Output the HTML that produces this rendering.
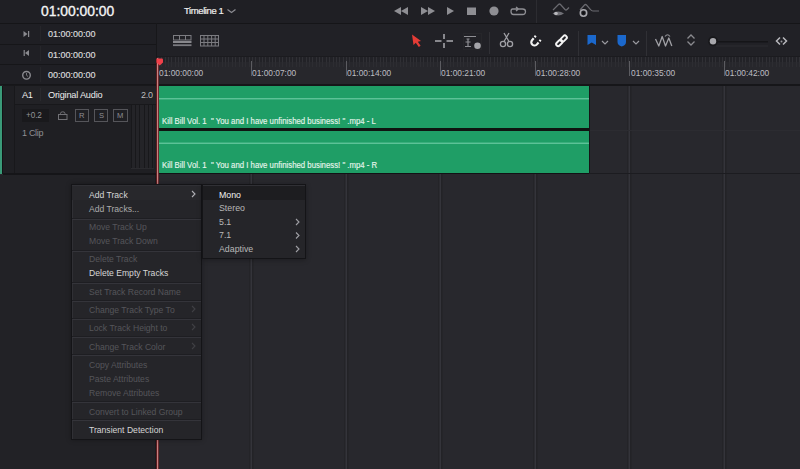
<!DOCTYPE html>
<html><head><meta charset="utf-8">
<style>
*{margin:0;padding:0;box-sizing:border-box}
html,body{width:800px;height:469px;overflow:hidden;background:#28282d;font-family:"Liberation Sans",sans-serif;color:#c8c8c8}
.a{position:absolute}
.t{position:absolute;white-space:pre;line-height:12px}
svg{position:absolute;overflow:visible}
#top{left:0;top:0;width:800px;height:24px;background:#1f1f24;border-bottom:1px solid #151518}
.row{position:absolute;left:0;width:156px;height:21px;border-bottom:1px solid #161619;background:#1f1f24}
.tc{font-size:9px;color:#dcdcdc;-webkit-text-stroke:0.2px #d0d0d0}
.vl{position:absolute;width:1px;background:#323237}
.mi{position:absolute;left:89px;font-size:8.6px;line-height:12px;white-space:pre;color:#d6d6d6}
.dis{color:#55555a}
.ms{position:absolute;left:72px;width:129px;height:2px;border-top:1px solid #1e1e22;background:#34343a}
.si{position:absolute;left:219px;font-size:8.8px;line-height:12px;white-space:pre;color:#b8b8b8}
</style></head><body>
<!-- top bar -->
<div class="a" id="top"></div>
<div class="t" style="left:41px;top:3px;font-size:14.6px;transform:scaleX(0.95);transform-origin:0 0;-webkit-text-stroke:0.35px #f4f4f4;color:#f4f4f4;line-height:16px">01:00:00:00</div>
<div class="t" style="left:184px;top:5px;font-size:9.5px;letter-spacing:-0.4px;-webkit-text-stroke:0.2px #eee;color:#f0f0f0">Timeline 1</div>
<svg style="left:226px;top:8px" width="12" height="6"><path d="M1.5 1.5 L5.5 4.5 L9.5 1.5" stroke="#8a8a90" stroke-width="1.3" fill="none"/></svg>

<!-- transport -->
<svg style="left:394px;top:7px" width="140" height="10">
 <g fill="#8e8e93">
  <path d="M7 0 L0 4 L7 8Z M14 0 L7 4 L14 8Z"/>
  <path d="M27 0 L34 4 L27 8Z M34 0 L41 4 L34 8Z"/>
  <path d="M53 0 L60 4 L53 8Z"/>
  <rect x="73" y="0.5" width="9" height="7.5"/>
  <circle cx="100" cy="4" r="4.6"/>
 </g>
 <path d="M118.5 2 H128.5 Q131.5 2 131.5 4.5 Q131.5 7.5 128.5 7.5 H119.5 Q117 7.5 117 4.5 Q117 2 118.5 2 M122 0 L124.5 2 L122 4" stroke="#8e8e93" stroke-width="1.3" fill="none"/>
</svg>
<div class="a" style="left:536px;top:0;width:1px;height:23px;background:#2c2c31"></div>
<!-- keyframe icons -->
<svg style="left:545px;top:0px" width="60" height="20">
 <g stroke="#6a6a70" stroke-width="1.2" fill="none">
  <path d="M8 10 Q11 7 13.5 4.5 Q14.5 3.5 15.5 4.5 L20 9.5 Q21 10.5 22 9.5 L24 7.5"/>
  <path d="M35 10 L39.5 5 Q40.5 4 41.5 5 L45.5 9.5 Q46.5 11 48 11 H54"/>
 </g>
 <path d="M7.5 13.5 Q13 9.5 19 13.5 Q13 17.5 7.5 13.5Z" fill="#707076"/>
 <circle cx="11" cy="13.5" r="1.8" fill="#b8b8bd"/>
 <circle cx="38.5" cy="13" r="3.2" fill="none" stroke="#a8a8ad" stroke-width="1.6"/>
 <circle cx="38.5" cy="13" r="1.2" fill="#0e0e10"/>
</svg>

<!-- left panel -->
<div class="a" style="left:0;top:24px;width:156px;height:150px;background:#212125"></div>
<div class="row" style="top:24px;height:21px"></div>
<div class="row" style="top:45px;height:20px"></div>
<div class="row" style="top:65px;height:20px"></div>
<div class="vl" style="left:40px;top:26px;height:15px;background:#26262a"></div>
<div class="vl" style="left:40px;top:46px;height:15px;background:#26262a"></div>
<div class="vl" style="left:40px;top:67px;height:15px;background:#26262a"></div>
<div class="t tc" style="left:48px;top:28px">01:00:00:00</div>
<div class="t tc" style="left:48px;top:49px">01:00:00:00</div>
<div class="t tc" style="left:48px;top:69px">00:00:00:00</div>
<svg style="left:22px;top:29px" width="12" height="52">
 <g fill="#8a8a8f">
  <path d="M1.5 2 L5.5 5 L1.5 8Z"/><rect x="6" y="2" width="1.2" height="6"/>
  <path d="M7 21 L3 24 L7 27Z"/><rect x="1.6" y="21" width="1.2" height="6"/>
 </g>
 <circle cx="4.5" cy="46.3" r="3.8" stroke="#8a8a8f" stroke-width="1.4" fill="none"/>
 <path d="M4.5 44 V46.3 L6 47.5" stroke="#77777c" stroke-width="1" fill="none"/>
</svg>

<!-- track header -->
<div class="a" style="left:0;top:175px;width:156px;height:294px;background:#222226;border-right:1px solid #1a1a1e"></div>
<div class="a" style="left:0;top:86px;width:2px;height:88px;background:#3a9a78"></div>
<div class="a" style="left:2px;top:86px;width:1px;height:88px;background:#121214"></div>
<div class="a" style="left:3px;top:85px;width:153px;height:90px;background:#1f1f23;border-top:1px solid #18181b;border-bottom:2px solid #151518"></div>
<div class="a" style="left:14px;top:86px;width:1px;height:87px;background:#18181b"></div>
<div class="a" style="left:15px;top:86px;width:141px;height:18px;background:#222226"></div>
<div class="a" style="left:15px;top:104px;width:141px;height:1px;background:#18181b"></div>
<div class="vl" style="left:40px;top:88px;height:13px;background:#2a2a2e"></div>
<div class="t" style="left:22px;top:89px;font-size:9.2px;letter-spacing:-0.3px;color:#ececec">A1</div>
<div class="t" style="left:48px;top:89px;font-size:9.2px;letter-spacing:-0.2px;color:#ececec">Original Audio</div>
<div class="t" style="left:141px;top:89px;font-size:9px;letter-spacing:-0.2px;color:#bcbcbc">2.0</div>
<div class="a" style="left:22px;top:109px;width:27px;height:13px;background:#19191c"></div>
<div class="t" style="left:26px;top:110px;font-size:8.2px;letter-spacing:-0.1px;color:#949497">+0.2</div>
<svg style="left:58px;top:111px" width="12" height="12">
 <path d="M2.5 3.5 V2.5 Q2.5 0.8 4.75 0.8 Q7 0.8 7 2.5 V3.5" stroke="#707075" stroke-width="1" fill="none"/>
 <rect x="0.5" y="3.5" width="8.5" height="5" stroke="#707075" stroke-width="1" fill="none"/>
</svg>
<div class="a" style="left:75px;top:109px;width:14px;height:13px;border:1px solid #55555a"></div>
<div class="a" style="left:94px;top:109px;width:14px;height:13px;border:1px solid #55555a"></div>
<div class="a" style="left:113px;top:109px;width:15px;height:13px;border:1px solid #55555a"></div>
<div class="t" style="left:79px;top:110px;font-size:7.6px;color:#8e8e93">R</div>
<div class="t" style="left:99px;top:110px;font-size:7.6px;color:#8e8e93">S</div>
<div class="t" style="left:117px;top:110px;font-size:7.6px;color:#8e8e93">M</div>
<div class="t" style="left:22px;top:127px;font-size:9px;letter-spacing:-0.3px;color:#909094">1 Clip</div>
<div class="a" style="left:131px;top:105px;width:23px;height:64px;background:repeating-linear-gradient(90deg,#18181b 0 1px,#242428 1px 4.2px);border-bottom:1px solid #2a2a2e"></div>

<!-- timeline toolbar -->
<div class="a" style="left:157px;top:24px;width:643px;height:33px;background:#212126"></div>
<div class="a" style="left:156px;top:23px;width:1px;height:151px;background:#17171a"></div>
<svg style="left:173px;top:35px" width="50" height="13">
 <g stroke="#7c7c81" stroke-width="1" fill="none">
  <rect x="0.5" y="0.5" width="17.5" height="4.5"/>
  <path d="M6.5 0 V5 M12.5 0 V5"/>
 </g>
 <rect x="0" y="6" width="18.5" height="2" fill="#88888d"/>
 <rect x="0" y="9.3" width="18.5" height="1.8" fill="#7a7a7f"/>
 <g stroke="#7c7c81" stroke-width="1" fill="none">
  <rect x="27.5" y="0.5" width="18" height="10.5"/>
  <path d="M27 4 H46 M27 7.5 H46 M31 0 V11 M34.8 0 V11 M38.6 0 V11 M42.2 0 V11"/>
 </g>
</svg>
<!-- tools -->
<svg style="left:410px;top:33px" width="390" height="18">
 <path d="M2 1.5 L3.5 12 L5.8 9.8 L8.8 14 L10.6 12.8 L7.8 8.8 L11 8Z" fill="#e53c36"/>
 <g stroke="#ababb0" stroke-width="1.5" fill="none">
  <path d="M34 1 V6 M34 10 V15 M25 8 H31.5 M36.5 8 H43"/>
 </g>
 <g stroke="#8e8e93" stroke-width="1.2" fill="none">
  <path d="M54 3.5 H66 M56.5 6 H59.5 M58 6 V13 M55 13.5 H61 M55.5 9 H60.5"/>
 </g>
 <rect x="53.5" y="0.5" width="18" height="16" stroke="#26262a" stroke-width="1" fill="none"/>
 <circle cx="67.5" cy="12.8" r="3.3" fill="#a5a5aa"/>
 <g stroke="#a0a0a5" stroke-width="1.3" fill="none">
  <circle cx="93" cy="11" r="2.6"/><circle cx="100" cy="11" r="2.6"/>
  <path d="M94 8.5 L99 0 M99 8.5 L94 0"/>
 </g>
 <g transform="translate(124.5 9.3) rotate(40)" stroke="#f2f2f2" fill="none">
  <path d="M-3.2 -2.5 V0 A3.2 3.2 0 0 0 3.2 0 V-2.5" stroke-width="2.2"/>
  <path d="M-3.2 -4 V-5.8 M3.2 -4 V-5.8" stroke-width="2.2"/>
 </g>
 <g stroke="#f2f2f2" stroke-width="1.9" fill="none">
  <rect x="-3.6" y="-2" width="7.2" height="4" rx="2" transform="translate(153.7 5.6) rotate(-45)"/>
  <rect x="-3.6" y="-2" width="7.2" height="4" rx="2" transform="translate(149.3 10) rotate(-45)"/>
 </g>
</svg>
<div class="a" style="left:489px;top:32px;width:1px;height:22px;background:#303035"></div>
<div class="a" style="left:578px;top:31px;width:1px;height:25px;background:#303035"></div>
<div class="a" style="left:646px;top:31px;width:1px;height:25px;background:#303035"></div>
<svg style="left:585px;top:33px" width="210" height="16">
 <path d="M2.5 2 H11 V12 L6.75 9.5 L2.5 12Z" fill="#1b68cc"/>
 <path d="M17 8 L20 11 L23 8" stroke="#9a9aa0" stroke-width="1.2" fill="none"/>
 <path d="M32.5 2 H41 V9 Q41 12 36.75 13.5 Q32.5 12 32.5 9Z" fill="#1b68cc"/>
 <path d="M48 8 L51 11 L54 8" stroke="#9a9aa0" stroke-width="1.2" fill="none"/>
 <path d="M70.5 6 L73.8 13 L77.2 3.5 L80.5 13 L83.8 5 L86.8 13" stroke="#a0a0a5" stroke-width="1.3" stroke-linejoin="round" fill="none"/>
 <path d="M80 3.5 Q82.5 0 85 3.5" stroke="#8a8a8f" stroke-width="1.2" fill="none"/>
 <path d="M102.5 5.5 L106 2 L109.5 5.5 M102.5 8.5 L106 12 L109.5 8.5" stroke="#8a8a8f" stroke-width="1.3" fill="none"/>
 <rect x="131" y="8" width="52" height="1.5" fill="#151518"/>
 <rect x="131" y="12.5" width="52" height="1" fill="#2c2c31"/>
 <circle cx="128" cy="8.3" r="5" fill="#18181b"/>
 <circle cx="128" cy="8.3" r="3.2" fill="#a8a8ad"/>
 <path d="M195 4.5 L191.5 8 L195 11.5 M198 4.5 L201.5 8 L198 11.5" stroke="#b8b8bd" stroke-width="1.5" fill="none"/>
 <circle cx="196.5" cy="8.5" r="1" fill="#9a9a9f"/>
</svg>

<!-- ruler -->
<div class="a" style="left:157px;top:56px;width:643px;height:1px;background:#1b1b1f"></div>
<div class="a" style="left:157px;top:58px;width:643px;height:27px;background:#27272c"></div>
<div class="a" style="left:157px;top:84px;width:643px;height:2px;background:#161619"></div>

<!-- grid lines -->
<div class="a" style="left:249px;top:86px;width:5px;height:383px;background:linear-gradient(90deg,#26262a 0,#222226 1px,#34343a 2px,#34343a 3px,#222226 3px,#26262a 5px)"></div>
<div class="a" style="left:344px;top:86px;width:5px;height:383px;background:linear-gradient(90deg,#26262a 0,#222226 1px,#34343a 2px,#34343a 3px,#222226 3px,#26262a 5px)"></div>
<div class="a" style="left:438px;top:86px;width:5px;height:383px;background:linear-gradient(90deg,#26262a 0,#222226 1px,#34343a 2px,#34343a 3px,#222226 3px,#26262a 5px)"></div>
<div class="a" style="left:533px;top:86px;width:5px;height:383px;background:linear-gradient(90deg,#26262a 0,#222226 1px,#34343a 2px,#34343a 3px,#222226 3px,#26262a 5px)"></div>
<div class="a" style="left:627px;top:86px;width:5px;height:383px;background:linear-gradient(90deg,#26262a 0,#222226 1px,#34343a 2px,#34343a 3px,#222226 3px,#26262a 5px)"></div>
<div class="a" style="left:722px;top:86px;width:5px;height:383px;background:linear-gradient(90deg,#26262a 0,#222226 1px,#34343a 2px,#34343a 3px,#222226 3px,#26262a 5px)"></div>
<div class="a" style="left:157px;top:130px;width:643px;height:1px;background:#2c2c31"></div>
<div class="a" style="left:157px;top:173px;width:643px;height:1px;background:#1c1c20"></div>

<!-- ruler ticks + labels -->
<div class="a" style="left:158px;top:57px;width:642px;height:5px;background:repeating-linear-gradient(90deg,#303035 0 1px,#222227 1px 3.357px)"></div>
<div class="a" style="left:158px;top:62px;width:642px;height:5px;background:repeating-linear-gradient(90deg,#2d2d32 0 1px,#27272c 1px 3.357px)"></div>
<div class="a" style="left:251px;top:61px;width:1px;height:15px;background:#5c5c61"></div>
<div class="a" style="left:346px;top:61px;width:1px;height:15px;background:#5c5c61"></div>
<div class="a" style="left:440px;top:61px;width:1px;height:15px;background:#5c5c61"></div>
<div class="a" style="left:535px;top:61px;width:1px;height:15px;background:#5c5c61"></div>
<div class="a" style="left:629px;top:61px;width:1px;height:15px;background:#5c5c61"></div>
<div class="a" style="left:724px;top:61px;width:1px;height:15px;background:#5c5c61"></div>
<div class="t" style="left:159px;top:67px;font-size:8.4px;color:#bdbdc2">01:00:00:00</div>
<div class="t" style="left:252px;top:67px;font-size:8.4px;color:#bdbdc2">01:00:07:00</div>
<div class="t" style="left:347px;top:67px;font-size:8.4px;color:#bdbdc2">01:00:14:00</div>
<div class="t" style="left:441px;top:67px;font-size:8.4px;color:#bdbdc2">01:00:21:00</div>
<div class="t" style="left:536px;top:67px;font-size:8.4px;color:#bdbdc2">01:00:28:00</div>
<div class="t" style="left:631px;top:67px;font-size:8.4px;color:#bdbdc2">01:00:35:00</div>
<div class="t" style="left:725px;top:67px;font-size:8.4px;color:#bdbdc2">01:00:42:00</div>

<!-- clips -->
<div class="a" style="left:158px;top:86px;width:431px;height:42px;background:#1f9e66"></div>
<div class="a" style="left:158px;top:131px;width:431px;height:42px;background:#1f9e66"></div>
<div class="a" style="left:158px;top:98px;width:431px;height:1px;background:#5cc297"></div>
<div class="a" style="left:158px;top:99px;width:431px;height:1px;background:#3aae7c"></div>
<div class="a" style="left:158px;top:143px;width:431px;height:1px;background:#5cc297"></div>
<div class="a" style="left:158px;top:142px;width:431px;height:1px;background:#3aae7c"></div>
<div class="a" style="left:158px;top:128px;width:431px;height:3px;background:#0f1411"></div>
<div class="a" style="left:158px;top:173px;width:431px;height:1px;background:#121215"></div>
<div class="a" style="left:589px;top:86px;width:1px;height:87px;background:#151517"></div>
<div class="t" style="left:162px;top:115px;font-size:9px;transform:scaleX(0.866);transform-origin:0 0;color:#e6f5ec;-webkit-text-stroke:0.15px #e6f5ec">Kill Bill Vol. 1  " You and I have unfinished business! " .mp4 - L</div>
<div class="t" style="left:162px;top:159px;font-size:9px;transform:scaleX(0.866);transform-origin:0 0;color:#e6f5ec;-webkit-text-stroke:0.15px #e6f5ec">Kill Bill Vol. 1  " You and I have unfinished business! " .mp4 - R</div>

<!-- playhead -->
<div class="a" style="left:156px;top:58px;width:3px;height:411px;background:#5a1c1f"></div>
<div class="a" style="left:157px;top:58px;width:1px;height:411px;background:#c98282"></div>
<div class="a" style="left:158px;top:58px;width:1px;height:411px;background:#6e2c2e"></div>
<svg style="left:155px;top:58px" width="9" height="9"><path d="M1.5 1.5 Q1.5 0.5 2.5 0.5 H7 Q8 0.5 8 1.5 V4.5 L4.75 7.5 L1.5 4.5Z" fill="#f0404a"/></svg>

<!-- context menu -->
<div class="a" style="left:71px;top:184px;width:131px;height:256px;background:#252529;border:1px solid #141417;box-shadow:0 0 5px rgba(0,0,0,0.3),inset 1px 1px 0 #303035"></div>
<div class="a" style="left:72px;top:186px;width:129px;height:14px;background:#28282c"></div>
<div class="ms" style="top:218px"></div>
<div class="ms" style="top:250px"></div>
<div class="ms" style="top:282px"></div>
<div class="ms" style="top:300px"></div>
<div class="ms" style="top:318px"></div>
<div class="ms" style="top:336px"></div>
<div class="ms" style="top:354px"></div>
<div class="ms" style="top:401px"></div>
<div class="ms" style="top:419px"></div>
<div class="mi" style="top:189px">Add Track</div>
<div class="mi" style="top:203px;color:#ababab">Add Tracks...</div>
<div class="mi dis" style="top:221px">Move Track Up</div>
<div class="mi dis" style="top:235px">Move Track Down</div>
<div class="mi dis" style="top:253px">Delete Track</div>
<div class="mi" style="top:267px">Delete Empty Tracks</div>
<div class="mi dis" style="top:286px">Set Track Record Name</div>
<div class="mi dis" style="top:304px">Change Track Type To</div>
<div class="mi dis" style="top:322px">Lock Track Height to</div>
<div class="mi dis" style="top:341px">Change Track Color</div>
<div class="mi dis" style="top:359px">Copy Attributes</div>
<div class="mi dis" style="top:373px">Paste Attributes</div>
<div class="mi dis" style="top:387px">Remove Attributes</div>
<div class="mi dis" style="top:406px">Convert to Linked Group</div>
<div class="mi" style="top:424px">Transient Detection</div>
<svg style="left:190px;top:190px" width="8" height="170">
 <path d="M2 1 L5 4 L2 7" stroke="#b0b0b5" stroke-width="1.1" fill="none"/>
 <path d="M2 116 L5 119 L2 122 M2 134 L5 137 L2 140 M2 153 L5 156 L2 159" stroke="#404045" stroke-width="1.1" fill="none"/>
</svg>

<!-- submenu -->
<div class="a" style="left:202px;top:184px;width:104px;height:75px;background:#252529;border:1px solid #141417;box-shadow:0 1px 5px rgba(0,0,0,0.3),inset 0 1px 0 #303035"></div>
<div class="a" style="left:203px;top:186px;width:102px;height:14px;background:#1d1d20"></div>
<div class="si" style="top:189px;color:#f0f0f0">Mono</div>
<div class="si" style="top:202px">Stereo</div>
<div class="si" style="top:216px">5.1</div>
<div class="si" style="top:229px">7.1</div>
<div class="si" style="top:243px">Adaptive</div>
<svg style="left:294px;top:218px" width="8" height="36">
 <path d="M2 1 L5 4 L2 7 M2 14.5 L5 17.5 L2 20.5 M2 28 L5 31 L2 34" stroke="#a0a0a5" stroke-width="1.1" fill="none"/>
</svg>
</body></html>
